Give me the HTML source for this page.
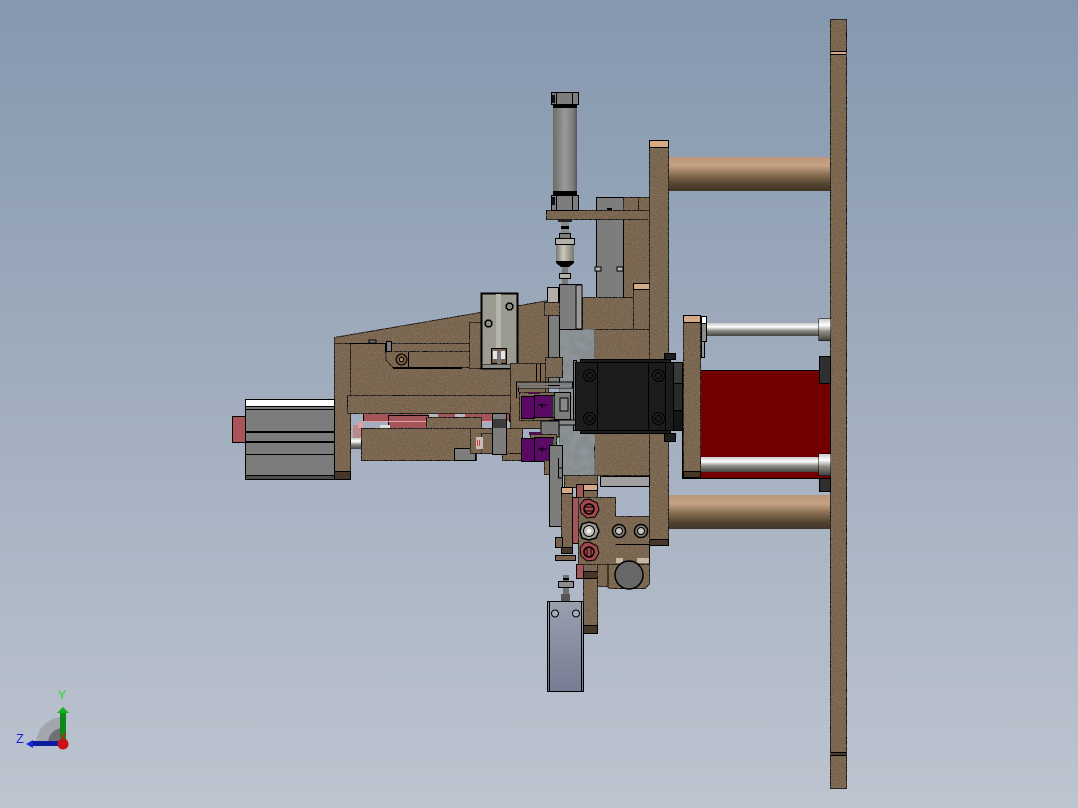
<!DOCTYPE html>
<html lang="en">
<head>
<meta charset="utf-8">
<title>CAD assembly view</title>
<style>
html,body{margin:0;padding:0;width:1078px;height:808px;overflow:hidden;background:#a0adbe}
svg{display:block}
.b{fill:#75604a;stroke:#000;stroke-width:1;filter:url(#n)}
.t{fill:#d4ab86;stroke:#000;stroke-width:1}
.d{fill:#463729;stroke:#000;stroke-width:1}
.g{fill:#7d7d7d;stroke:#000;stroke-width:1}
.p{fill:#a45559;stroke:#000;stroke-width:1}
.v{fill:#5a0a64;stroke:#000;stroke-width:1}
.x{fill:#1c1c1c;stroke:#000;stroke-width:1}
.l{fill:none;stroke:#000;stroke-width:1}
</style>
</head>
<body>
<svg width="1078" height="808" viewBox="0 0 1078 808" xmlns="http://www.w3.org/2000/svg">
<defs>
<linearGradient id="bg" x1="0" y1="0" x2="0" y2="1">
<stop offset="0" stop-color="#8598ae"/>
<stop offset="1" stop-color="#bec4d0"/>
</linearGradient>
<linearGradient id="big" x1="0" y1="0" x2="0" y2="1">
<stop offset="0" stop-color="#b9977a"/>
<stop offset=".25" stop-color="#c6a283"/>
<stop offset=".5" stop-color="#8f7358"/>
<stop offset=".8" stop-color="#54442f"/>
<stop offset="1" stop-color="#3f3429"/>
</linearGradient>
<linearGradient id="rod" x1="0" y1="0" x2="0" y2="1">
<stop offset="0" stop-color="#c8c8c8"/>
<stop offset=".3" stop-color="#ffffff"/>
<stop offset=".6" stop-color="#8a8a84"/>
<stop offset="1" stop-color="#44423f"/>
</linearGradient>
<linearGradient id="tube" x1="0" y1="0" x2="1" y2="0">
<stop offset="0" stop-color="#6c6c6c"/>
<stop offset=".5" stop-color="#9a9a9a"/>
<stop offset=".85" stop-color="#7a7a7a"/>
<stop offset="1" stop-color="#5e5060"/>
</linearGradient>
<linearGradient id="body" x1="0" y1="0" x2="1" y2="0">
<stop offset="0" stop-color="#77776f"/>
<stop offset=".4" stop-color="#c8c8bc"/>
<stop offset="1" stop-color="#77776f"/>
</linearGradient>
<linearGradient id="cylv" x1="0" y1="0" x2="0" y2="1">
<stop offset="0" stop-color="#9aa0b0"/>
<stop offset="1" stop-color="#767c92"/>
</linearGradient>
<filter id="n" x="-15%" y="-15%" width="130%" height="130%">
<feTurbulence type="fractalNoise" baseFrequency="0.8" numOctaves="2" seed="4" result="t"/>
<feColorMatrix in="t" type="matrix" values="0 0 0 0 .6  0 0 0 0 .5  0 0 0 0 .4  .35 .35 0 0 -.3" result="c"/>
<feComposite in="c" in2="SourceGraphic" operator="in" result="m"/>
<feMerge><feMergeNode in="SourceGraphic"/><feMergeNode in="m"/></feMerge>
</filter>
<filter id="c" x="-5%" y="-5%" width="110%" height="110%">
<feTurbulence type="fractalNoise" baseFrequency="0.1" numOctaves="3" seed="7" result="t"/>
<feColorMatrix in="t" type="matrix" values="0 0 0 0 .27  0 0 0 0 .3  0 0 0 0 .32  2.6 0 0 0 -.8" result="c"/>
<feComposite in="c" in2="SourceGraphic" operator="in" result="m"/>
<feMerge><feMergeNode in="SourceGraphic"/><feMergeNode in="m"/></feMerge>
</filter>
</defs>

<rect width="1078" height="808" fill="url(#bg)"/>

<g shape-rendering="crispEdges">
<!-- far right plate -->
<rect class="b" x="830.500" y="19.500" width="16" height="769"/>
<rect x="831" y="52" width="15" height="2" fill="#d4ab86"/>
<path class="l" d="M831 51.500H846M831 54.500H846M831 752.500H846M831 755.500H846"/>
<rect x="831" y="753" width="15" height="2" fill="#4a3b2c"/>

<!-- big rods -->
<rect x="668" y="157" width="162" height="34" fill="url(#big)"/>
<rect x="668" y="495" width="162" height="34" fill="url(#big)"/>

<!-- red cylinder -->
<rect x="682.500" y="370.500" width="148" height="108" fill="#730000" stroke="#000"/>
<rect x="819.500" y="356.500" width="11" height="27" fill="#2f2f2f" stroke="#000"/>
<rect x="819.500" y="478.500" width="11" height="13" fill="#2f2f2f" stroke="#000"/>

<!-- thin rods -->
<rect x="705" y="323" width="114" height="13" fill="url(#rod)"/>
<rect x="818.500" y="318.500" width="12" height="22" fill="url(#rod)" stroke="#000" stroke-width=".5"/>
<rect x="700" y="457" width="119" height="15" fill="url(#rod)"/>
<rect x="818.500" y="453.500" width="12" height="22" fill="url(#rod)" stroke="#000" stroke-width=".5"/>
<rect x="701.500" y="316.500" width="5" height="7" fill="#fff" stroke="#000"/>
<rect x="701.500" y="323.500" width="5" height="18" fill="#8e8a84" stroke="#000"/>
<rect x="701.500" y="341.500" width="3" height="16" fill="#9a9a92" stroke="#000"/>

<!-- plate 2 -->
<rect class="b" x="683.500" y="315.500" width="17" height="162"/>
<rect class="t" x="683.500" y="315.500" width="17" height="7"/>
<rect class="d" x="683.500" y="471.500" width="17" height="6"/>

<!-- upper stacks -->
<rect class="b" x="623.500" y="197.500" width="26" height="100"/>
<rect class="g" x="596.500" y="197.500" width="27" height="100"/>
<rect class="b" x="623.500" y="197.500" width="15" height="14"/>
<rect x="607" y="208" width="5" height="2" fill="#000"/>
<rect x="595" y="267" width="6" height="4" fill="#b5b5ad" stroke="#000"/>
<rect x="617" y="267" width="6" height="4" fill="#b5b5ad" stroke="#000"/>

<rect class="b" x="582.500" y="297.500" width="67" height="32"/>
<rect class="b" x="594.500" y="329.500" width="55" height="30"/>
<rect class="b" x="594.500" y="433.500" width="55" height="42"/>
<rect class="b" x="633.500" y="283.500" width="16" height="46"/>
<rect class="t" x="633.500" y="283.500" width="16" height="6"/>

<!-- center plate -->
<rect class="b" x="649.500" y="140.500" width="19" height="405"/>
<rect class="t" x="649.500" y="140.500" width="19" height="7"/>
<rect class="d" x="649.500" y="539.500" width="19" height="6"/>

<!-- top plate -->
<rect class="b" x="546.500" y="210.500" width="103" height="9"/>

<!-- top cylinder -->
<rect x="553" y="107" width="24" height="85" fill="url(#tube)"/>
<rect x="553" y="105" width="24" height="3" fill="#000"/>
<rect x="553" y="191" width="24" height="4" fill="#000"/>
<rect class="g" x="551.500" y="92.500" width="27" height="12"/>
<rect class="g" x="551.500" y="195.500" width="27" height="15"/>
<path class="l" d="M556.500 93V104M572.500 93V104M556.500 196V210M572.500 196V210"/>
<rect x="552" y="95" width="3" height="8" fill="#111"/>
<rect x="552" y="197" width="3" height="8" fill="#111"/>

<!-- piston -->
<rect x="561" y="220" width="8" height="18" fill="#8a8a84"/>
<rect x="558" y="219" width="14" height="3" fill="#222"/>
<rect x="561" y="226" width="8" height="3" fill="#000"/>
<rect class="g" x="559.500" y="233.500" width="11" height="5"/>
<rect x="555.500" y="238.500" width="19" height="6" fill="#b2b2aa" stroke="#000"/>
<rect x="556" y="245" width="18" height="17" fill="url(#body)"/>
<path d="M556 261H574V263L569 267H561L556 263Z" fill="#000"/>
<rect x="562" y="267" width="6" height="17" fill="#7a7a74"/>
<rect x="559.500" y="273.500" width="11" height="5" fill="#b2b2aa" stroke="#000"/>

<!-- concrete grey -->
<rect x="559.500" y="329.500" width="35" height="146" fill="#858b8e" stroke="#000" filter="url(#c)"/>

<!-- wedge housing -->
<path class="b" d="M334.500 337.500L480.500 312.500L548.500 300.500V395.500H334.500Z"/>
<rect class="b" x="334.500" y="343.500" width="16" height="136"/>
<rect class="d" x="334.500" y="471.500" width="16" height="8"/>
<rect class="b" x="350.500" y="343.500" width="160" height="52"/>
<path class="b" d="M408.500 351.500H469.500V367.500H393L386 360V351.500Z"/>
<path d="M393 368H462" stroke="#000" stroke-width="2" fill="none"/>
<path class="l" d="M350.500 343.500H385.500V353M408.500 352V367"/>
<rect x="369" y="340" width="7" height="3" fill="#777" stroke="#000"/>
<rect class="g" x="386.500" y="341.500" width="5" height="10"/>
<circle cx="401.500" cy="359.500" r="5.500" fill="#6b563f" stroke="#000"/>
<circle cx="401.500" cy="359.500" r="2" fill="#b28a5c" stroke="#000"/>
<rect class="b" x="469.500" y="322.500" width="12" height="46"/>

<!-- bottom pink -->
<rect class="p" x="363.500" y="412.500" width="146" height="9"/>
<rect x="428" y="413" width="10" height="4" fill="#b9b9b9"/>
<rect x="455" y="413" width="10" height="4" fill="#b9b9b9"/>
<rect class="p" x="388.500" y="415.500" width="40" height="14"/>
<rect x="363" y="421" width="146" height="1" fill="#e9a0a0"/>
<rect x="351" y="438" width="11" height="11" fill="url(#rod)"/>
<rect x="353" y="425" width="9" height="13" fill="#bb8a8a"/>
<rect x="358" y="422" width="5" height="6" fill="#e6a0a0"/>
<rect x="380" y="425" width="10" height="3" fill="#ddd"/>

<rect class="b" x="347.500" y="395.500" width="163" height="18"/>
<rect class="b" x="361.500" y="428.500" width="115" height="32"/>
<rect class="g" x="454.500" y="448.500" width="21" height="12"/>
<rect class="b" x="426.500" y="417.500" width="55" height="11"/>

<!-- motor -->
<rect x="245.500" y="399.500" width="89" height="80" fill="#7c7c7c" stroke="#000"/>
<rect x="246" y="400" width="88" height="6" fill="#fff"/>
<path class="l" d="M246 406.500H334M246 409.500H334"/>
<path d="M246 431.500H334M246 442H334M246 454.500H334M246 475.500H334" stroke="#000" fill="none"/>
<path d="M246 432H334M246 442H334" stroke="#000" stroke-width="2" fill="none"/>
<rect x="246" y="476" width="88" height="3" fill="#4d4d4d"/>
<rect x="232.500" y="416.500" width="13" height="26" fill="#a85458" stroke="#000"/>

<!-- lower blocks -->
<rect class="b" x="470.500" y="428.500" width="52" height="25"/>
<rect class="b" x="502.500" y="453.500" width="21" height="7"/>
<rect class="b" x="481.500" y="433.500" width="12" height="20"/>
<rect x="476" y="437" width="7" height="12" fill="#c9bdb8"/>
<rect x="477" y="440" width="1" height="6" fill="#c44"/>
<rect x="479" y="440" width="1" height="6" fill="#c44"/>
<rect class="g" x="492.500" y="413.500" width="14" height="41"/>
<rect x="493" y="419" width="13" height="9" fill="#3c3c3c"/>

<!-- linear slide -->
<rect x="481.500" y="293.500" width="36" height="75" fill="#9b9b92" stroke="#000" stroke-width="2"/>
<rect x="496" y="294" width="5" height="70" fill="#b6b6ac"/>
<rect x="482" y="364" width="28" height="4" fill="#8c8c86" stroke="#000" stroke-width=".5"/>
<circle cx="488.500" cy="323.500" r="3.500" fill="#8a8a80" stroke="#000" stroke-width="1.500"/>
<circle cx="509.500" cy="306.500" r="3.500" fill="#8a8a80" stroke="#000" stroke-width="1.500"/>
<rect x="491.500" y="348.500" width="15" height="15" fill="#77614a" stroke="#000"/>
<rect x="493" y="351" width="12" height="8" fill="#e4e4e4"/>
<rect x="497" y="351" width="4" height="13" fill="#777"/>

<!-- connector brown -->
<rect class="b" x="510.500" y="363.500" width="35" height="65"/>
<path class="l" d="M536.500 364V381M540.500 364V381"/>

<!-- grey column -->
<rect class="g" x="548.500" y="315.500" width="11" height="70"/>
<rect class="g" x="559.500" y="284.500" width="22" height="45"/>
<rect x="576" y="285" width="6" height="44" fill="#9a9a9a" stroke="#000"/>
<rect x="547.500" y="287.500" width="11" height="15" fill="#b0aea6" stroke="#000"/>
<rect class="b" x="544.500" y="302.500" width="15" height="13"/>
<rect class="b" x="545.500" y="357.500" width="17" height="20"/>

<!-- connector frames -->
<rect class="b" x="519.500" y="392.500" width="36" height="28"/>
<path d="M516.500 398V382H572.500V388H518.500V392" fill="none" stroke="#000" stroke-width="1"/>
<path d="M517 384H572M519 387H571" fill="none" stroke="#7a7a7a" stroke-width="2"/>
<rect class="g" x="554.500" y="392.500" width="16" height="27"/>
<rect x="560" y="398" width="8" height="13" fill="#888" stroke="#000"/>
<rect x="573.500" y="360.500" width="3" height="70" fill="#777" stroke="#000"/>
<rect x="550" y="420" width="26" height="5" fill="#888" stroke="#000"/>
<rect class="v" x="521.500" y="396.500" width="13" height="22"/>
<rect class="v" x="534.500" y="395.500" width="19" height="22"/>
<path d="M538 405H547M542 403V408" stroke="#000" fill="none"/>
<rect x="553" y="396" width="1.500" height="21" fill="#1c7a22"/>
<rect x="528" y="392" width="12" height="2" fill="#4a1050"/>

<rect x="541" y="421" width="18" height="16" fill="#777" stroke="#000"/>
<rect class="b" x="530.500" y="434.500" width="26" height="12"/>
<rect class="v" x="521.500" y="438.500" width="13" height="23"/>
<rect class="v" x="534.500" y="437.500" width="19" height="24"/>
<path d="M538 449H547M542 447V452" stroke="#000" fill="none"/>
<rect x="553" y="439" width="1.500" height="20" fill="#1c7a22"/>
<rect x="529" y="432" width="12" height="3" fill="#4a1050"/>
<rect class="b" x="544.500" y="460.500" width="8" height="14"/>
<rect class="g" x="549.500" y="445.500" width="13" height="81"/>
<path class="l" d="M558.500 458V468H562M558.500 468V478H562"/>

<!-- black block -->
<rect class="x" x="580.500" y="359.500" width="90" height="3"/>
<rect class="x" x="580.500" y="430.500" width="90" height="3"/>
<rect class="x" x="575.500" y="362.500" width="99" height="68"/>
<rect x="673.500" y="362.500" width="9" height="21" fill="#393939" stroke="#000"/>
<rect x="673.500" y="383.500" width="9" height="27" fill="#2a2a2a" stroke="#000"/>
<rect x="673.500" y="410.500" width="9" height="20" fill="#151515" stroke="#000"/>
<rect x="664.500" y="353.500" width="11" height="6" fill="#1d1d1d" stroke="#000"/>
<rect x="664.500" y="433.500" width="11" height="8" fill="#1d1d1d" stroke="#000"/>
<path class="l" d="M597.500 363V430M648.500 363V430M665.500 363V430"/>
<g fill="#1c1c1c" stroke="#000">
<circle cx="589.500" cy="375.500" r="6"/><circle cx="589.500" cy="375.500" r="3"/>
<circle cx="658.500" cy="375.500" r="6"/><circle cx="658.500" cy="375.500" r="3"/>
<circle cx="589.500" cy="418.500" r="6"/><circle cx="589.500" cy="418.500" r="3"/>
<circle cx="658.500" cy="418.500" r="6"/><circle cx="658.500" cy="418.500" r="3"/>
</g>

<!-- under block -->
<rect x="600.500" y="476.500" width="49" height="10" fill="#a0a0a0" stroke="#000"/>
<rect class="b" x="564.500" y="475.500" width="33" height="12"/>

<!-- lower left strips -->
<rect class="b" x="583.500" y="484.500" width="14" height="14"/>
<rect class="t" x="583.500" y="484.500" width="14" height="6"/>
<rect class="b" x="561.500" y="487.500" width="11" height="66"/>
<rect class="t" x="561.500" y="487.500" width="11" height="6"/>
<rect class="d" x="561.500" y="547.500" width="11" height="6"/>
<rect class="p" x="572.500" y="497.500" width="6" height="46"/>
<rect class="p" x="576.500" y="484.500" width="7" height="13"/>
<rect class="p" x="576.500" y="564.500" width="7" height="14"/>
<rect x="555.500" y="537.500" width="7" height="10" fill="#77614a" stroke="#000"/>
<rect x="555.500" y="555.500" width="20" height="5" fill="#77614a" stroke="#000"/>
<rect class="b" x="583.500" y="564.500" width="14" height="69"/>
<rect class="d" x="583.500" y="571.500" width="14" height="7"/>
<rect class="d" x="583.500" y="625.500" width="14" height="8"/>

<!-- lower bracket -->
<path class="b" d="M578.500 497.500H615.500V516.500H649.500V564.500H578.500Z"/>
<path class="b" d="M597.500 564.500H649.500V584L645 588.500H610L607 586.500H597.500Z"/>
<path class="l" d="M615.500 544.500H649.500V564"/>
<rect x="616" y="558" width="7" height="5" fill="#c6b7a4"/>
<rect x="637" y="558" width="12" height="5" fill="#c6b7a4"/>
</g>
<path class="l" d="M608 565V586"/>
<circle cx="629" cy="575" r="14" fill="#686868" stroke="#000" stroke-width="1.500"/>
<g stroke="#000">
<polygon points="589,499 597,503 599,510 595,517 587,518 581,513 580,505 584,500" fill="#a5494e"/>
<circle cx="589" cy="509" r="5" fill="#a5494e" stroke-width="1.500"/>
<path d="M585 507H593M585 511H593" fill="none"/>
<polygon points="589,542 597,546 599,553 595,560 587,561 581,556 580,548 584,543" fill="#a5494e"/>
<circle cx="589" cy="552" r="5" fill="#a5494e" stroke-width="1.500"/>
<path d="M587 548V556M591 548V556" fill="none"/>
<polygon points="589,522 596,524 599,531 596,538 589,540 582,538 580,531 582,524" fill="#9d9d96" stroke-width="1.500"/>
<circle cx="589" cy="531" r="5.500" fill="#c3c3bd"/>
<circle cx="589" cy="531" r="2" fill="#f2f2f2" stroke="none"/>
<circle cx="619" cy="531" r="6.500" fill="#807a72" stroke-width="1.500"/>
<circle cx="619" cy="531" r="3.500" fill="#c7c7c2"/>
<circle cx="641" cy="531" r="6.500" fill="#807a72" stroke-width="1.500"/>
<circle cx="641" cy="531" r="3.500" fill="#c7c7c2"/>
</g>

<!-- bottom cylinder -->
<g shape-rendering="crispEdges">
<rect x="563" y="575" width="6" height="26" fill="#6f6f6f"/>
<rect x="563" y="578" width="6" height="2" fill="#000"/>
<rect x="558.500" y="581.500" width="15" height="6" fill="#8e8e8e" stroke="#000"/>
<rect x="561" y="594" width="9" height="7" fill="#555"/>
<rect x="547.500" y="601.500" width="36" height="90" fill="url(#cylv)" stroke="#000"/>
<path class="l" d="M549.500 602V691M581.500 602V691"/>
</g>
<circle cx="555" cy="613.500" r="3.500" fill="#a5adbd" stroke="#000"/>
<circle cx="576" cy="613.500" r="3.500" fill="#a5adbd" stroke="#000"/>

<!-- triad -->
<path d="M63 743V717A27 27 0 0 0 36 743Z" fill="#a3a7ad"/>
<path d="M63 743V728A15 15 0 0 0 48 743Z" fill="#6e7175"/>
<rect x="60" y="712" width="6" height="30" fill="#0f8a18"/>
<polygon points="63,707 69,713 57,713" fill="#12b020"/>
<rect x="33" y="741" width="29" height="5" fill="#0c1aa0"/>
<polygon points="26,744 33,740 33,748" fill="#1626d8"/>
<circle cx="63" cy="744" r="5.500" fill="#c81218"/>
<path d="M60 733L63 738L66 733" stroke="#e01018" fill="none"/>
<text x="58" y="699" font-family="'Liberation Sans',sans-serif" font-size="12" fill="#22d62a">Y</text>
<text x="16" y="743" font-family="'Liberation Sans',sans-serif" font-size="13" fill="#1a22e0">Z</text>
</svg>
</body>
</html>
